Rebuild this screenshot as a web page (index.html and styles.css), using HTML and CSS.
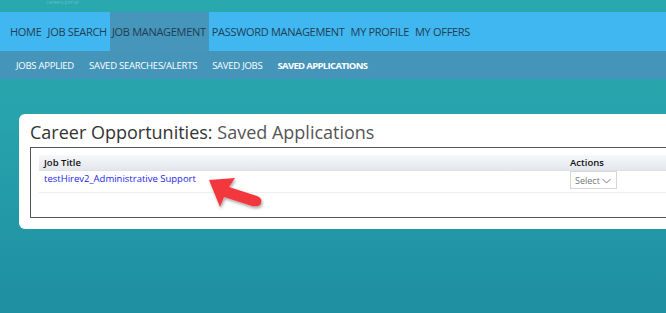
FILE: index.html
```html
<!DOCTYPE html>
<html>
<head>
<meta charset="utf-8">
<link rel="stylesheet" href="styles.css">
</head>
<body>
<div class="top"><span class="logo">careers portal</span></div>
<nav class="primary">
  <a class="pitem">HOME</a>
  <a class="pitem">JOB SEARCH</a>
  <a class="pitem active">JOB MANAGEMENT</a>
  <a class="pitem">PASSWORD MANAGEMENT</a>
  <a class="pitem">MY PROFILE</a>
  <a class="pitem">MY OFFERS</a>
</nav>
<nav class="secondary">
  <a class="sitem">JOBS APPLIED</a>
  <a class="sitem">SAVED SEARCHES/ALERTS</a>
  <a class="sitem">SAVED JOBS</a>
  <a class="sitem current">SAVED APPLICATIONS</a>
</nav>
<main class="content">
  <section class="card">
    <h1 class="title"><span class="t1">Career Opportunities:</span> <span class="t2">Saved Applications</span></h1>
    <div class="tablebox">
      <div class="thead">
        <span class="c1">Job Title</span>
        <span class="c2">Actions</span>
      </div>
      <div class="trow">
        <a class="c1 link">testHirev2_Administrative Support</a>
        <span class="c2"><span class="select">Select<svg class="chev" width="9" height="6" viewBox="0 0 9 6"><path d="M0.5 1 L4.5 5 L8.5 1" fill="none" stroke="#777" stroke-width="1"/></svg></span></span>
      </div>
    </div>
    <svg class="arrow" width="64" height="48" viewBox="0 0 64 48">
      <defs>
        <filter id="sh" x="-20%" y="-20%" width="150%" height="150%">
          <feDropShadow dx="1" dy="2" stdDeviation="1.5" flood-color="#000" flood-opacity="0.35"/>
        </filter>
      </defs>
      <path filter="url(#sh)" d="M3 4 L29 2 L23 11 L51 20 Q58 23 54 29 Q51 31 46 30 L18 21 L14 31 Z" fill="#f2373c"/>
    </svg>
  </section>
</main>
</body>
</html>
```

FILE: styles.css
```css
html, body {
  margin: 0;
  padding: 0;
}
body {
  width: 666px;
  height: 313px;
  overflow: hidden;
  font-family: "Open Sans", "Liberation Sans", sans-serif;
  background: linear-gradient(to bottom, #29a7ae 0px, #27a3ad 120px, #1e8ea1 313px);
}
a { text-decoration: none; }
.top {
  height: 12px;
  background: #29a8ae;
  position: relative;
  overflow: hidden;
}
.logo {
  position: absolute;
  left: 46px;
  top: 0;
  font-size: 5px;
  line-height: 5px;
  color: #62bfc5;
}
.primary {
  display: flex;
  height: 39px;
  background: #41b7f1;
  padding-left: 7px;
}
.pitem {
  display: flex;
  align-items: center;
  padding: 0 3px;
  font-size: 11px;
  color: #1f3e52;
  letter-spacing: -0.3px;
}
.pitem.active {
  background: #4695bb;
  padding: 0 3px 0 2px;
}
.secondary {
  display: flex;
  height: 28px;
  background: #4594ba;
  padding-left: 16px;
  gap: 15px;
  align-items: center;
}
.sitem {
  font-size: 9.5px;
  color: #fff;
  letter-spacing: -0.25px;
}
.sitem.current {
  font-weight: 700;
  letter-spacing: -0.65px;
}
.content {
  padding: 35px 0 0 19px;
}
.card {
  position: relative;
  background: #fff;
  border-radius: 6px 0 0 6px;
  height: 115px;
  padding: 7px 0 0 11px;
  box-sizing: border-box;
}
.title {
  margin: 0;
  font-size: 18px;
  font-weight: 400;
  line-height: 22px;
  letter-spacing: 0;
}
.t1 { color: #333; }
.t2 { color: #555; }
.tablebox {
  margin-top: 4px;
  border: 1px solid #555;
  border-right: none;
  height: 71px;
  padding: 7px 0 0 8px;
  box-sizing: border-box;
}
.thead {
  display: flex;
  height: 15px;
  align-items: center;
  background: linear-gradient(to bottom, #f6f7f9, #e3e7ec);
  border-bottom: 1px solid #dde2e8;
  font-size: 9.5px;
  color: #111;
  font-weight: 600;
}
.c1 {
  width: 526px;
  padding-left: 5px;
  flex: none;
}
.c2 { flex: none; }
.trow {
  display: flex;
  height: 21px;
  align-items: flex-start;
  border-bottom: 1px solid #eceef0;
  font-size: 9.5px;
}
.link {
  color: #1b1ee8;
  padding-top: 1px;
}
.select {
  display: inline-flex;
  align-items: center;
  gap: 2px;
  border: 1px solid #d6d6d6;
  height: 18px;
  padding: 0 4px;
  box-sizing: border-box;
  color: #777;
  font-size: 9px;
  width: 47px;
}
.chev { margin-top: 1px; }
.arrow {
  position: absolute;
  left: 187px;
  top: 62px;
}
```
